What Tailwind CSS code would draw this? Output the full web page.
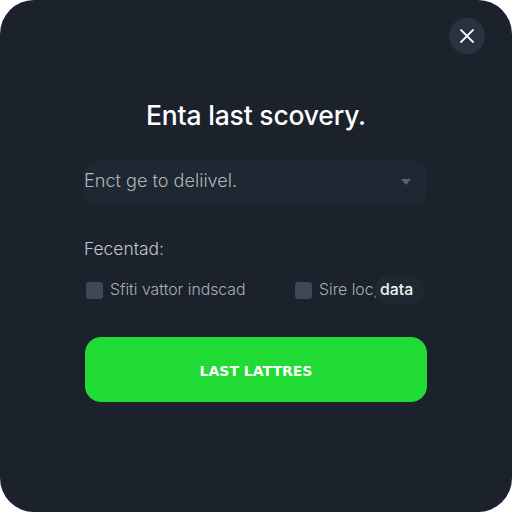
<!DOCTYPE html>
<html lang="en">
<head>
    <meta charset="UTF-8">
    <title>Last Scovery</title>
    <script src="https://cdn.jsdelivr.net/npm/@tailwindcss/browser@4"></script>
</head>
<body class="bg-white w-[512px] h-[512px] overflow-hidden font-['Inter',sans-serif]">
    <div class="relative w-[512px] h-[512px] rounded-[34px] bg-[#1b222c] pt-[99px] pl-[85px] pr-[85px]">
        <!-- Close -->
        <button class="absolute top-[18px] right-[27px] w-9 h-9 rounded-full bg-[#273340] flex items-center justify-center">
            <svg width="16" height="16" viewBox="0 0 16 16" fill="none" stroke="#f3f5f7" stroke-width="1.8" stroke-linecap="round"><path d="M2 2 14 14M14 2 2 14"/></svg>
        </button>

        <h1 class="text-[26.5px] leading-[32px] font-medium text-white text-center tracking-[-0.2px]">Enta last scovery.</h1>

        <div class="mt-[30px] h-11 -ml-px rounded-xl bg-[#1f2732] flex items-center justify-between pr-4">
            <span class="text-[18.1px] font-light text-[#b0b6bd] pb-[5px]">Enct ge to deliivel.</span>
            <span class="w-0 h-0 border-l-[5px] border-r-[5px] border-t-[6px] border-l-transparent border-r-transparent border-t-[#59636e] mb-[2px]"></span>
        </div>

        <p class="mt-[33px] -ml-px text-[17.4px] leading-[22px] font-light text-[#c2c7cd]">Fecentad:</p>

        <div class="mt-[16px] h-7 flex items-center whitespace-nowrap text-[15.8px] font-light text-[#a9b0b8]">
            <span class="shrink-0 w-[17px] h-[17px] ml-px rounded-[3px] bg-[#3b4858]"></span>
            <span class="ml-[7px] w-[185px] shrink-0">Sfiti vattor indscad</span>
            <span class="shrink-0 w-[17px] h-[17px] rounded-[3px] bg-[#3b4858]"></span>
            <span class="ml-[7px]">Sire loc,</span>
            <span class="-ml-[4px] h-7 pl-[6px] pr-[12px] flex items-center rounded-full bg-[#1f2833] text-[#f1f3f5] font-medium">data</span>
        </div>

        <button class="mt-[33px] w-full h-[65px] rounded-2xl bg-[#20db33] text-white text-[14px] font-semibold pt-[3px] font-['DejaVu_Sans',sans-serif]">LAST LATTRES</button>
    </div>
</body>
</html>
